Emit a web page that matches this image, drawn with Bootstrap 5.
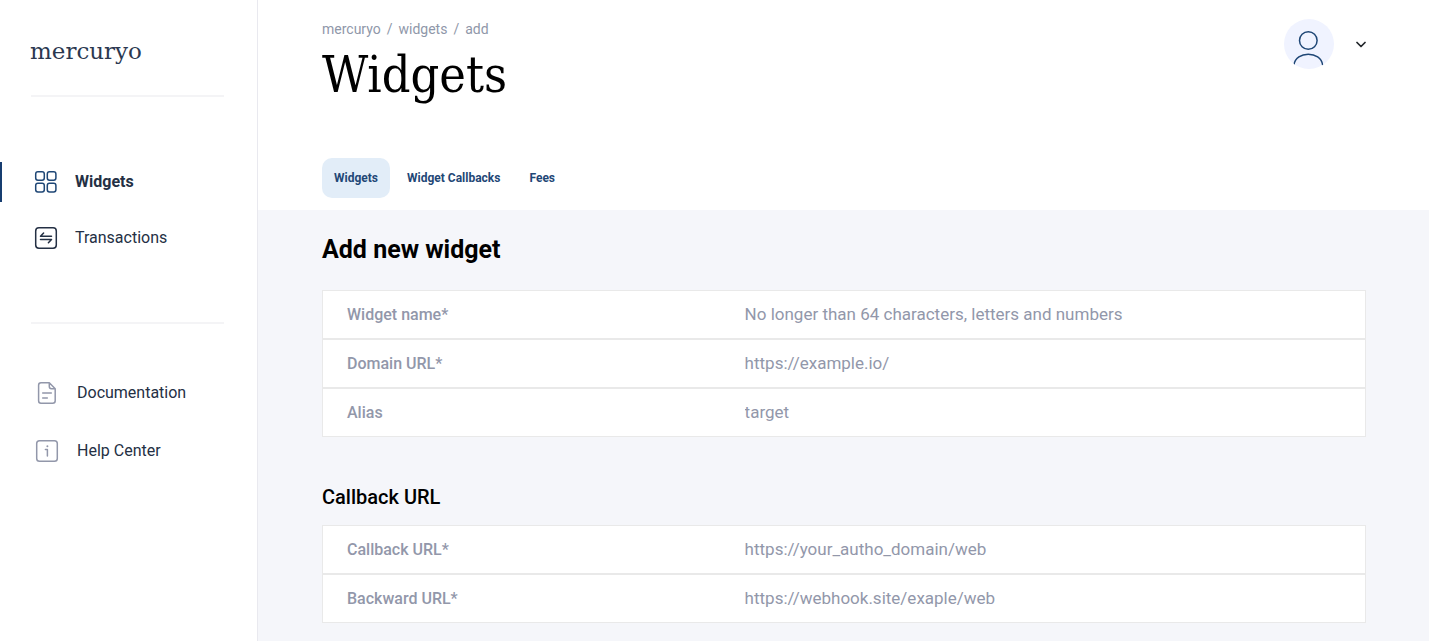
<!DOCTYPE html>
<html lang="en">
<head>
<meta charset="utf-8">
<meta name="viewport" content="width=device-width, initial-scale=1">
<title>Widgets</title>
<link href="https://cdn.jsdelivr.net/npm/bootstrap@5.3.0/dist/css/bootstrap.min.css" rel="stylesheet">
<style>
  body { font-family: Roboto, "Liberation Sans", sans-serif; font-size: 16px; line-height: 24px; color: #000; background: #fff; }
  a { text-decoration: none; }
  svg { display: block; fill: none; stroke: currentColor; stroke-linecap: round; stroke-linejoin: round; flex: none; }
  .sidebar { width: 258px; flex: none; border-right: 1px solid #e9e9ef; padding-top: 39px; }
  .brand { font-family: "DejaVu Serif", serif; font-size: 23px; line-height: 24px; color: #2b3850; margin: 0 30px 32px; }
  .divider { height: 2px; background: #f4f4f6; margin: 0 33px 0 31px; }
  .side-link { display: flex; align-items: center; gap: 17px; height: 40px; padding-left: 34px; color: #243044; font-size: 16px; }
  .side-link.active { border-left: 2px solid #173d70; padding-left: 32px; font-weight: 700; }
  .side-link.active svg { color: #1f4776; }
  .side-main { display: grid; gap: 16px; padding: 65px 0 64px; }
  .side-help { display: grid; gap: 18px; padding-top: 49px; }
  .side-help .side-link { gap: 18px; }
  .side-help svg { color: #9297aa; }
  .page { padding-left: 64px; padding-right: 63px; }
  .topbar { padding-top: 18px; height: 210px; }
  .breadcrumb { --bs-breadcrumb-divider-color: #8f97a9; --bs-breadcrumb-item-padding-x: 6px; font-size: 14px; line-height: 22px; }
  .breadcrumb a, .breadcrumb .active { color: #8f97a9; }
  .page-title { font-family: "DejaVu Serif Condensed", "DejaVu Serif", serif; font-size: 50px; line-height: 64px; font-weight: 400; margin: 3px 0 0; }
  .account { margin-top: 1px; }
  .avatar { width: 50px; height: 50px; border-radius: 50%; background: #f0f3ff; color: #1f4776; overflow: hidden; }
  .tabs { gap: 5px; margin-bottom: 12px; }
  .tabs .nav-link { padding: 8px 12px; border-radius: 10px; font-size: 12px; line-height: 24px; font-weight: 700; color: #1f4776; }
  .tabs .nav-link.active { background: #e2edf8; color: #1f4776; }
  .content { background: #f5f6fa; padding-top: 24px; padding-bottom: 18px; }
  h2 { font-size: 25px; line-height: 32px; font-weight: 700; margin: 0 0 24px; }
  h3 { font-size: 20px; line-height: 24px; font-weight: 500; margin: 48px 0 16px; }
  .field { height: 49px; border: 1px solid #e9e9e9; background: #fff; padding: 0 24px; display: flex; align-items: center; }
  .field label { flex: 0 0 40%; font-size: 16px; font-weight: 500; color: #9297aa; }
  .field input { flex: 1; min-width: 0; border: 0; padding: 0 0 2px; background: none; outline: 0; font-size: 17px; line-height: 24px; }
  .field input::placeholder { color: #9297aa; opacity: 1; }
</style>
</head>
<body>
<div class="d-flex min-vh-100">
  <aside class="sidebar">
    <a class="brand d-block" href="#">mercuryo</a>
    <div class="divider"></div>
    <nav class="side-main">
      <a class="side-link active" href="#">
        <svg width="24" height="24" stroke-width="1.5"><rect x="1.7" y="1.7" width="8.6" height="8.6" rx="2.2"/><rect x="13.3" y="1.7" width="8.6" height="8.6" rx="2.2"/><rect x="1.7" y="13.3" width="8.6" height="8.6" rx="2.2"/><rect x="13.3" y="13.3" width="8.6" height="8.6" rx="2.2"/></svg>
        Widgets</a>
      <a class="side-link" href="#">
        <svg width="24" height="24" stroke-width="1.5"><rect x="1.7" y="1.7" width="20.6" height="20.6" rx="3.2"/><path d="M9.6 7 6.5 10.3H17.5M6.5 13.5H17.5L14.4 16.8"/></svg>
        Transactions</a>
    </nav>
    <div class="divider"></div>
    <nav class="side-help">
      <a class="side-link" href="#">
        <svg width="25" height="24" stroke-width="1.5"><path d="M7 1.8H15.3L21.2 7.7V19.7Q21.2 22.2 18.7 22.2H7Q4.6 22.2 4.6 19.7V4.2Q4.6 1.8 7 1.8ZM15.3 2V5.5Q15.3 7.7 17.5 7.7H21M8.7 12H17.3M8.7 17H13.3"/></svg>
        Documentation</a>
      <a class="side-link" href="#">
        <svg width="25" height="24" stroke-width="1.5"><rect x="2.7" y="1.7" width="20.6" height="20.6" rx="2.8"/><path d="M11.4 10.6H13.4V17"/><path d="M13.4 7.2V7.3" stroke-width="2"/></svg>
        Help Center</a>
    </nav>
  </aside>

  <div class="flex-grow-1 d-flex flex-column">
    <header class="page topbar d-flex flex-column justify-content-between">
      <div class="d-flex justify-content-between align-items-start">
        <div>
          <nav aria-label="Breadcrumb">
            <ol class="breadcrumb mb-0">
              <li class="breadcrumb-item"><a href="#">mercuryo</a></li>
              <li class="breadcrumb-item"><a href="#">widgets</a></li>
              <li class="breadcrumb-item active" aria-current="page">add</li>
            </ol>
          </nav>
          <h1 class="page-title">Widgets</h1>
        </div>
        <button type="button" class="account btn p-0 border-0 d-flex align-items-center gap-3" aria-label="Account menu">
          <span class="avatar"><svg width="50" height="50" stroke-width="1.5"><circle cx="24.3" cy="21.5" r="8.8"/><path d="M10 46C11.5 31.6 37 31.6 38.6 46"/></svg></span>
          <svg width="16" height="16" stroke="#000" stroke-width="1.7"><path d="M7 6.5 11 10.5 15 6.5"/></svg>
        </button>
      </div>
      <nav class="tabs nav" aria-label="Sections">
        <a class="nav-link active" href="#">Widgets</a>
        <a class="nav-link" href="#">Widget Callbacks</a>
        <a class="nav-link" href="#">Fees</a>
      </nav>
    </header>

    <main class="page content flex-grow-1">
      <form>
        <h2>Add new widget</h2>
        <div class="field"><label for="wname">Widget name*</label><input id="wname" type="text" placeholder="No longer than 64 characters, letters and numbers"></div>
        <div class="field"><label for="domain">Domain URL*</label><input id="domain" type="text" placeholder="https://example.io/"></div>
        <div class="field"><label for="alias">Alias</label><input id="alias" type="text" placeholder="target"></div>
        <h3>Callback URL</h3>
        <div class="field"><label for="callback">Callback URL*</label><input id="callback" type="text" placeholder="https://your_autho_domain/web"></div>
        <div class="field"><label for="backward">Backward URL*</label><input id="backward" type="text" placeholder="https://webhook.site/exaple/web"></div>
      </form>
    </main>
  </div>
</div>
<script src="https://cdn.jsdelivr.net/npm/bootstrap@5.3.0/dist/js/bootstrap.bundle.min.js"></script>
</body>
</html>
